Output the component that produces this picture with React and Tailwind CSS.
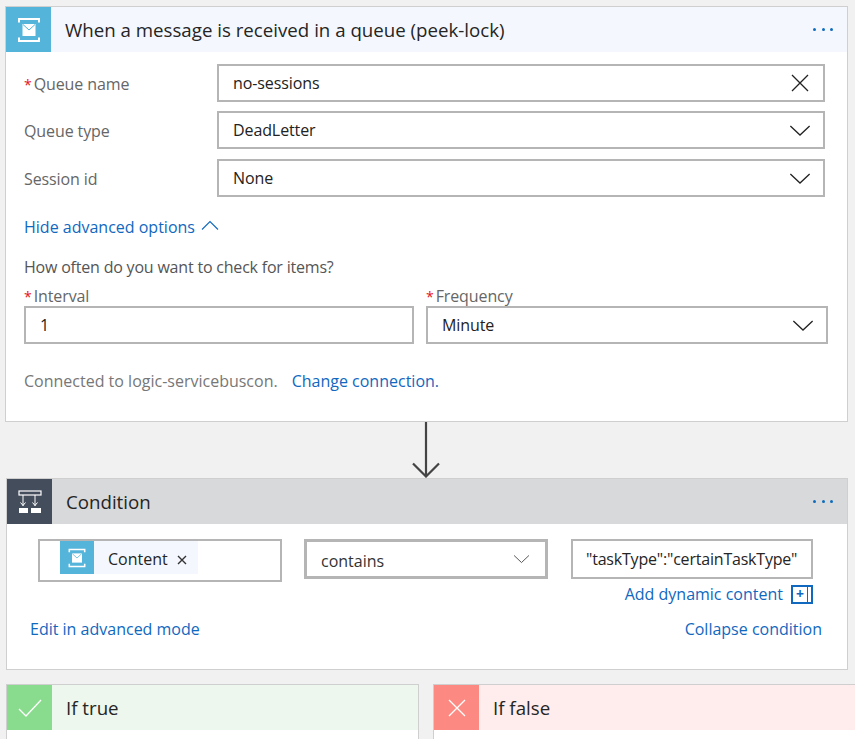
import React from "react";

function ServiceBusIcon({ size = 26 }) {
  return (
    <svg width={size} height={size} viewBox="0 0 26 26" fill="none">
      <path d="M3 5.5V2h20v3.5M3 20.5V24h20v-3.5" stroke="#fff" strokeWidth="2" />
      <rect x="6.5" y="7" width="13" height="12" fill="#fff" />
      <path d="M7 7.5l6 5.5l6-5.5" stroke="#54b4d9" strokeWidth="1" />
    </svg>
  );
}

function Chevron({ className = "w-[22px] h-[13px]", color = "#222" }) {
  return (
    <svg className={className} viewBox="0 0 24 14" fill="none">
      <path d="M1.5 2L12 12L22.5 2" stroke={color} strokeWidth="1.4" />
    </svg>
  );
}

function Dots({ className }) {
  return (
    <div className={`flex gap-[5.5px] ${className}`}>
      <span className="w-[3px] h-[3px] rounded-full bg-[#0f6cbd]" />
      <span className="w-[3px] h-[3px] rounded-full bg-[#0f6cbd]" />
      <span className="w-[3px] h-[3px] rounded-full bg-[#0f6cbd]" />
    </div>
  );
}

function Label({ required, children, className = "" }) {
  return (
    <div className={`text-[16px] leading-[20px] text-[#666] tracking-[-0.1px] ${className}`}>
      {required && <span className="text-[#e81123] text-[14px] mr-[2px]">*</span>}
      {children}
    </div>
  );
}

function Field({ value, icon, className = "" }) {
  return (
    <div className={`h-[38px] border-2 border-[#b5b5b5] bg-white flex items-center justify-between pl-[14px] pr-[12px] text-[16px] text-[#222] tracking-[-0.1px] ${className}`}>
      <span className="-mt-[1px]">{value}</span>
      {icon}
    </div>
  );
}

function FormRow({ label, required, value, icon, className = "" }) {
  return (
    <div className={`flex items-center ${className}`}>
      <Label required={required} className="w-[193px] mt-[2px]">{label}</Label>
      <Field value={value} icon={icon} className="w-[608px]" />
    </div>
  );
}

function Header({ tone, iconBg, icon, title, dots }) {
  return (
    <div className={`h-[45px] flex items-center ${tone}`}>
      <div className={`w-[45px] h-full flex items-center justify-center shrink-0 ${iconBg}`}>{icon}</div>
      <div className="ml-[14px] mt-[2px] text-[18.7px] text-[#252525]">{title}</div>
      {dots && <Dots className="ml-auto mr-[14px]" />}
    </div>
  );
}

export default function App() {
  return (
    <div className="w-[855px] h-[739px] overflow-hidden bg-[#f1f1f1] pt-[6px] font-['Open_Sans','Noto_Sans',sans-serif]">
      {/* trigger card */}
      <div className="ml-[5px] w-[843px] h-[416px] border border-[#cfcfcf] bg-white">
        <Header
          tone="bg-[#f4f8fe]"
          iconBg="bg-[#54b4d9]"
          icon={<ServiceBusIcon />}
          title="When a message is received in a queue (peek-lock)"
          dots
        />
        <div className="pl-[18px]">
          <FormRow
            className="mt-[12px]"
            required
            label="Queue name"
            value="no-sessions"
            icon={
              <svg className="w-[18px] h-[18px] mr-[2px]" viewBox="0 0 18 18" fill="none">
                <path d="M1 1L17 17M17 1L1 17" stroke="#222" strokeWidth="1.3" />
              </svg>
            }
          />
          <FormRow className="mt-[9px]" label="Queue type" value="DeadLetter" icon={<Chevron />} />
          <FormRow className="mt-[10px]" label="Session id" value="None" icon={<Chevron />} />
          <div className="mt-[19px] flex items-center text-[16px] leading-[22px] text-[#1068bf]">
            Hide advanced options
            <svg className="w-[18px] h-[10px] ml-[6px] -mt-[4px]" viewBox="0 0 18 10" fill="none">
              <path d="M1 9.5L9 1.5L17 9.5" stroke="#1068bf" strokeWidth="1.1" />
            </svg>
          </div>
          <div className="mt-[18px] text-[16px] leading-[22px] text-[#555] tracking-[-0.2px]">How often do you want to check for items?</div>
          <div className="mt-[8px] flex gap-[12px]">
            <div className="w-[390px]">
              <Label required>Interval</Label>
              <Field value="1" className="-mt-[1px]" />
            </div>
            <div className="w-[402px]">
              <Label required>Frequency</Label>
              <Field value="Minute" icon={<Chevron />} className="-mt-[1px]" />
            </div>
          </div>
          <div className="mt-[26px] flex text-[16px] leading-[22px]">
            <span className="text-[#777]">Connected to logic-servicebuscon.</span>
            <span className="ml-[14px] text-[#1068bf]">Change connection.</span>
          </div>
        </div>
      </div>

      {/* connector */}
      <div className="h-[56px] flex justify-center w-[852px]">
        <svg className="w-[32px] h-[56px]" viewBox="0 0 32 56" fill="none">
          <path d="M16 0V55M3 41.5L16 54.5L29 41.5" stroke="#444" strokeWidth="2.2" />
        </svg>
      </div>

      {/* condition card */}
      <div className="ml-[6px] w-[842px] h-[192px] border border-[#cfcfcf] bg-white">
        <Header
          tone="bg-[#d8d9db]"
          iconBg="bg-[#434d5b]"
          icon={
            <svg className="w-[24px] h-[24px]" viewBox="0 0 24 24" fill="none">
              <rect x="1" y="1" width="22" height="4" stroke="#fff" strokeWidth="1.2" />
              <path d="M5 5V16M17 5V16M2.5 12.5L5 15.5L7.5 12.5M14.5 12.5L17 15.5L19.5 12.5" stroke="#fff" strokeWidth="1" />
              <rect x="1" y="18" width="9" height="5" fill="#fff" />
              <rect x="13" y="18" width="10" height="5" fill="#fff" />
            </svg>
          }
          title="Condition"
          dots
        />
        <div className="flex items-start mt-[15px] ml-[31px]">
          <div className="w-[244px] h-[43px] border-2 border-[#b5b5b5] pl-[20px]">
            <div className="w-[138px] h-[33px] bg-[#f4f8fe] flex items-center">
              <div className="w-[34px] h-[33px] bg-[#54b4d9] flex items-center justify-center">
                <ServiceBusIcon size={20} />
              </div>
              <span className="ml-[14px] mt-[2px] text-[16px] text-[#252525]">Content</span>
              <svg className="w-[10px] h-[10px] ml-[9px] mt-[4px]" viewBox="0 0 10 10" fill="none">
                <path d="M1 1L9 9M9 1L1 9" stroke="#333" strokeWidth="1.4" />
              </svg>
            </div>
          </div>
          <div className="ml-[22px] w-[244px] h-[40px] border-[3px] border-[#b5b5b5] flex items-center justify-between pl-[14px] pr-[15px] text-[16px] text-[#333]">
            <span className="mt-[3px]">contains</span>
            <Chevron className="w-[17px] h-[10px]" color="#555" />
          </div>
          <div className="ml-[23px] w-[242px]">
            <div className="h-[40px] border-2 border-[#b5b5b5] flex items-center pl-[13px] text-[16px] text-[#252525] whitespace-nowrap tracking-[-0.2px]">
              "taskType":"certainTaskType"
            </div>
            <div className="mt-[4px] flex items-center justify-end text-[16px] leading-[22px] text-[#1068bf]">
              Add dynamic content
              <div className="ml-[8px] w-[22px] h-[19px] border-2 border-[#1068bf] flex items-stretch">
                <span className="flex-1 border-r border-[#1068bf] text-[14px] leading-[13px] font-bold text-center">+</span>
                <span className="w-[3px]" />
              </div>
            </div>
          </div>
        </div>
        <div className="flex justify-between mt-[13px] pl-[23px] pr-[25px] text-[16px] leading-[22px] text-[#1068bf]">
          <span>Edit in advanced mode</span>
          <span>Collapse condition</span>
        </div>
      </div>

      {/* branches */}
      <div className="flex mt-[14px] ml-[6px]">
        <div className="w-[413px] h-[60px] border border-b-0 border-[#cfcfcf] bg-white shrink-0">
          <Header
            tone="bg-[#edf7ee]"
            iconBg="bg-[#89dc8d]"
            icon={
              <svg className="w-[24px] h-[18px]" viewBox="0 0 24 18" fill="none">
                <path d="M1 10L8 17L23 1" stroke="#fff" strokeWidth="1.3" />
              </svg>
            }
            title="If true"
          />
        </div>
        <div className="ml-[14px] w-[440px] h-[60px] border border-b-0 border-r-0 border-[#cfcfcf] bg-white shrink-0">
          <Header
            tone="bg-[#ffecec]"
            iconBg="bg-[#fc8a82]"
            icon={
              <svg className="w-[18px] h-[18px]" viewBox="0 0 18 18" fill="none">
                <path d="M1 1L17 17M17 1L1 17" stroke="#fff" strokeWidth="1.3" />
              </svg>
            }
            title="If false"
          />
        </div>
      </div>
    </div>
  );
}
